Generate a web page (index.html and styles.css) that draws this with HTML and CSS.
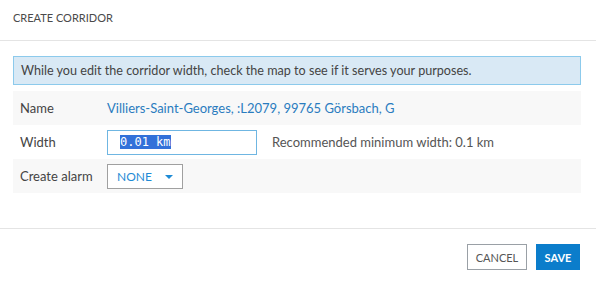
FILE: index.html
```html
<!DOCTYPE html>
<html lang="en">
<head>
  <meta charset="UTF-8" />
  <title>Create corridor</title>
  <link rel="stylesheet" href="styles.css">
</head>
<body>
  <div class="dialog">
    <div class="dialog-header">CREATE CORRIDOR</div>

    <div class="dialog-body">
      <div class="info">While you edit the corridor width, check the map to see if it serves your purposes.</div>

      <div class="row shaded">
        <span class="label">Name</span>
        <span class="name-value">Villiers-Saint-Georges, :L2079, 99765 Görsbach, G</span>
      </div>
      <div class="row">
        <span class="label">Width</span>
        <div class="text-input"><span class="selected">0.01 km</span></div>
        <span class="hint">Recommended minimum width: 0.1 km</span>
      </div>
      <div class="row shaded">
        <span class="label">Create alarm</span>
        <div class="dropdown">
          <span>NONE</span>
          <span class="caret"></span>
        </div>
      </div>
    </div>

    <div class="dialog-footer">
      <button class="btn btn-cancel">CANCEL</button>
      <button class="btn btn-save">SAVE</button>
    </div>
  </div>
</body>
</html>
```

FILE: styles.css
```css
body {
  margin: 0;
  font-family: Lato, "Liberation Sans", sans-serif;
  font-size: 13px;
  color: #444;
  background: #fff;
}

.dialog {
  width: 596px;
}

.dialog-header {
  height: 41px;
  line-height: 36px;
  padding: 0 13px;
  font-size: 11px;
  color: #4a4a4a;
  border-bottom: 1px solid #e4e4e4;
  box-sizing: border-box;
}

.dialog-body {
  padding: 15px 15px 35px 13px;
}

.info {
  background: #d9e9f5;
  border: 1px solid #8ccaec;
  height: 29px;
  box-sizing: border-box;
  line-height: 27px;
  padding: 0 7px;
  font-size: 12.6px;
  color: #444;
  margin-bottom: 6px;
}

.row {
  display: flex;
  align-items: center;
  height: 34px;
  padding-left: 7px;
}

.row.shaded {
  background: #f8f8f8;
}

.label {
  width: 87px;
  color: #444;
}

.name-value {
  color: #2a7cbf;
}

.text-input {
  width: 150px;
  height: 25px;
  box-sizing: border-box;
  border: 1px solid #6fb6e2;
  padding-left: 12px;
  display: flex;
  align-items: center;
  font-family: "DejaVu Sans Mono", monospace;
  font-size: 12px;
}

.selected {
  background: #3271d9;
  color: #fff;
  line-height: 14px;
}

.hint {
  margin-left: 15px;
  color: #555;
}

.dropdown {
  width: 76px;
  height: 25px;
  box-sizing: border-box;
  border: 1px solid #a0a0a0;
  display: flex;
  align-items: center;
  justify-content: space-between;
  padding: 0 9px;
  color: #1f8bd5;
  font-size: 12px;
  background: #fff;
}

.caret {
  width: 0;
  height: 0;
  border-left: 4px solid transparent;
  border-right: 4px solid transparent;
  border-top: 4px solid #1f8bd5;
  margin-top: 1px;
}

.dialog-footer {
  border-top: 1px solid #e4e4e4;
  display: flex;
  justify-content: flex-end;
  gap: 9px;
  padding: 15px 16px 0 0;
}

.btn {
  height: 26px;
  font-family: Lato, "Liberation Sans", sans-serif;
  font-size: 11px;
  padding: 0;
  border-radius: 0;
  cursor: pointer;
}

.btn-cancel {
  width: 60px;
  background: #fff;
  border: 1px solid #9aa0a6;
  color: #555;
}

.btn-save {
  width: 44px;
  background: #0b7dcb;
  border: 1px solid #0b7dcb;
  color: #fff;
  font-weight: bold;
}
```
